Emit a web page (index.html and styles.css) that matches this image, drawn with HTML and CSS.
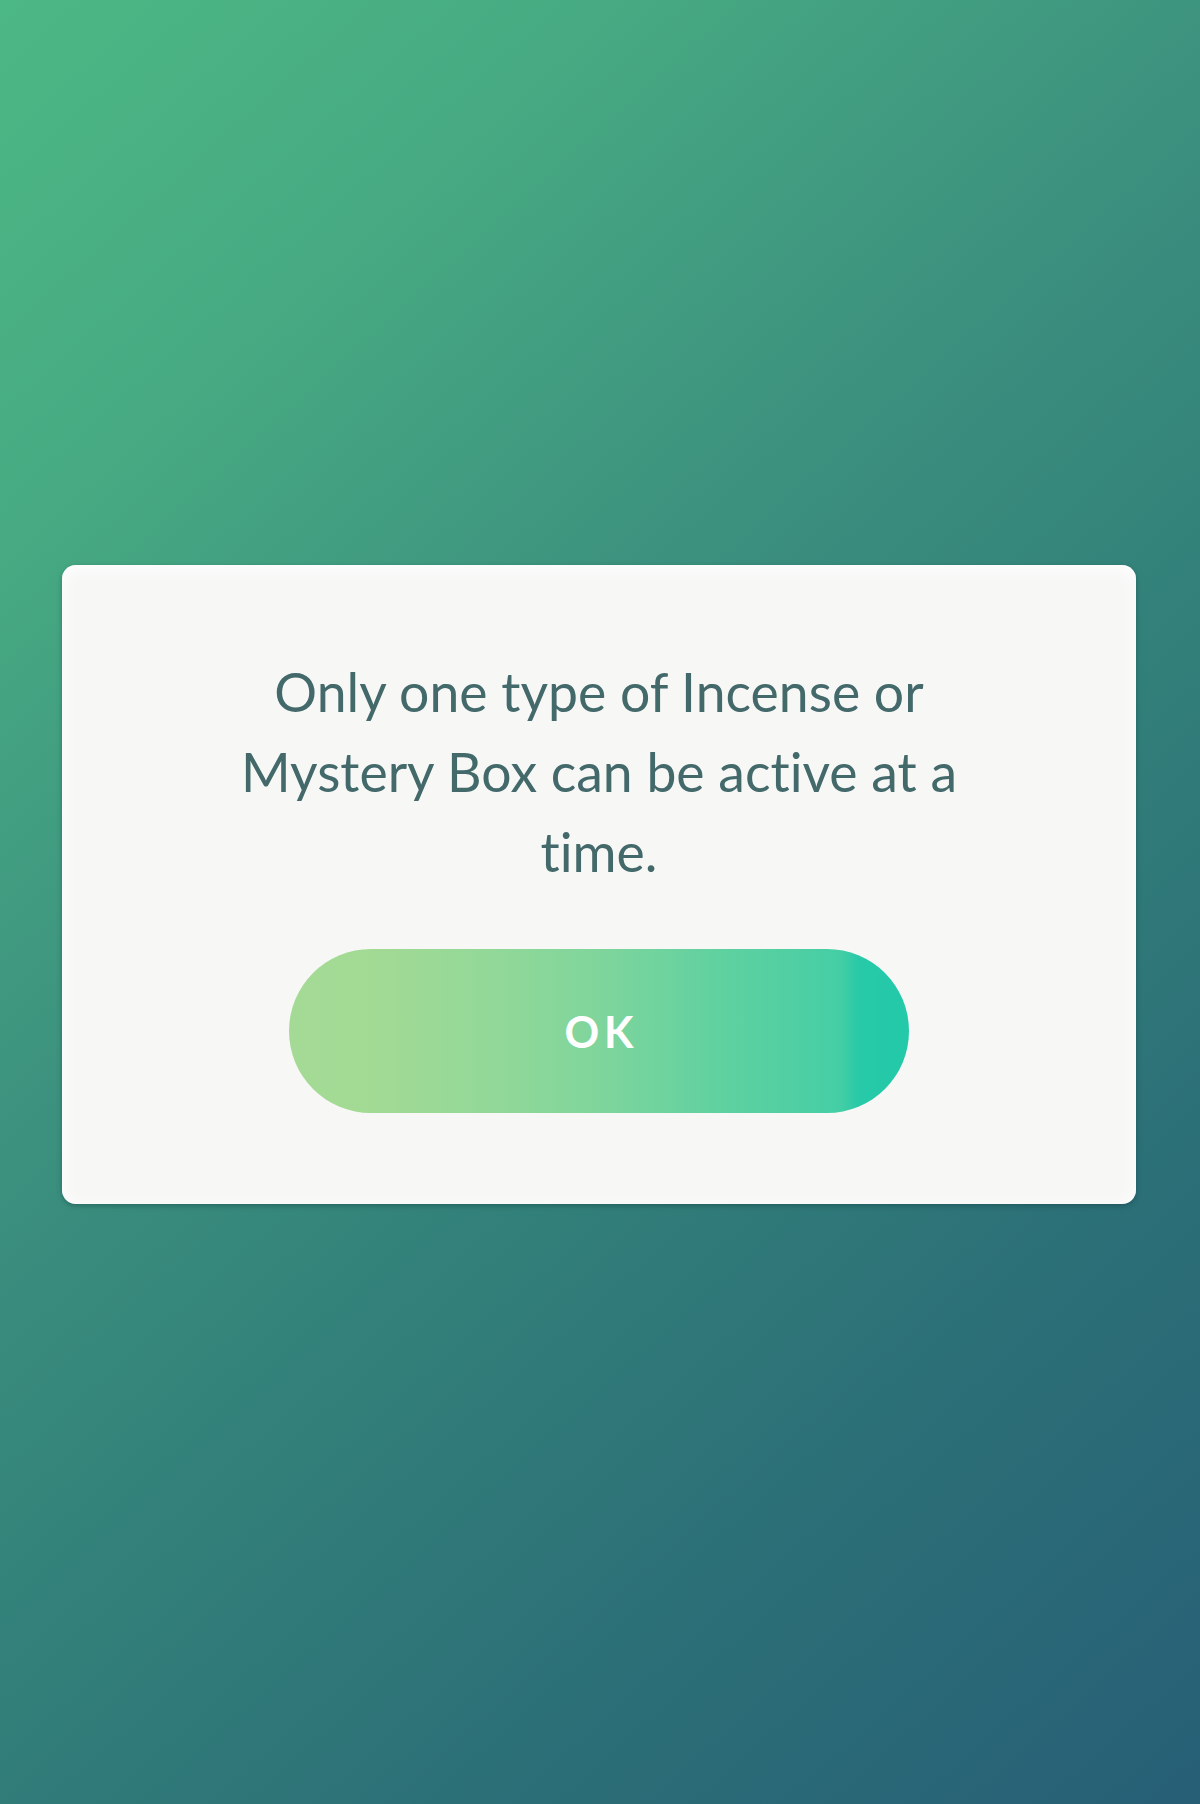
FILE: index.html
```html
<!DOCTYPE html>
<html lang="en">
<head>
<meta charset="utf-8">
<title>Notice</title>
<link rel="stylesheet" href="styles.css">
</head>
<body>
<main class="screen">
  <section class="dialog">
    <p class="message">Only one type of Incense or Mystery Box can be active at a time.</p>
    <button class="ok-btn" type="button">OK</button>
  </section>
</main>
</body>
</html>
```

FILE: styles.css
```css
html, body {
  margin: 0;
  padding: 0;
}
body {
  width: 1200px;
  height: 1804px;
  font-family: Lato, "Open Sans", sans-serif;
  font-variant-ligatures: none;
  overflow: hidden;
}
.screen {
  width: 1200px;
  height: 1804px;
  box-sizing: border-box;
  padding: 565px 64px 0 62px;
  background: linear-gradient(138deg, #4cb884 0%, #46a982 20%, #3c917e 40%, #33827a 56%, #2c7077 76%, #265f76 100%);
}
.dialog {
  box-sizing: border-box;
  width: 1074px;
  height: 639px;
  padding: 86px 0 0 0;
  background: #f7f8f6;
  border-radius: 14px;
  box-shadow: 0 2px 5px rgba(10, 50, 50, 0.35), inset 0 3px 18px rgba(255, 255, 255, 0.9);
  display: flex;
  flex-direction: column;
  align-items: center;
}
.message {
  margin: 0;
  width: 790px;
  text-align: center;
  font-size: 53.5px;
  line-height: 80px;
  color: #44696b;
  font-weight: 400;
  font-variant-ligatures: none;
}
.ok-btn {
  margin-top: 58px;
  width: 620px;
  height: 164px;
  border: none;
  border-radius: 82px;
  padding: 0 0 0 5px;
  background: linear-gradient(90deg, #a4da95 0%, #a2da94 14%, #93d898 32%, #7fd59c 50%, #62d1a0 68%, #4fcfa3 82%, #44cea5 89%, #27c9a8 92%, #23c9a9 100%);
  font-family: Lato, "Open Sans", sans-serif;
  font-weight: 700;
  font-size: 43px;
  letter-spacing: 5px;
  color: #ffffff;
  display: flex;
  align-items: center;
  justify-content: center;
}
```
